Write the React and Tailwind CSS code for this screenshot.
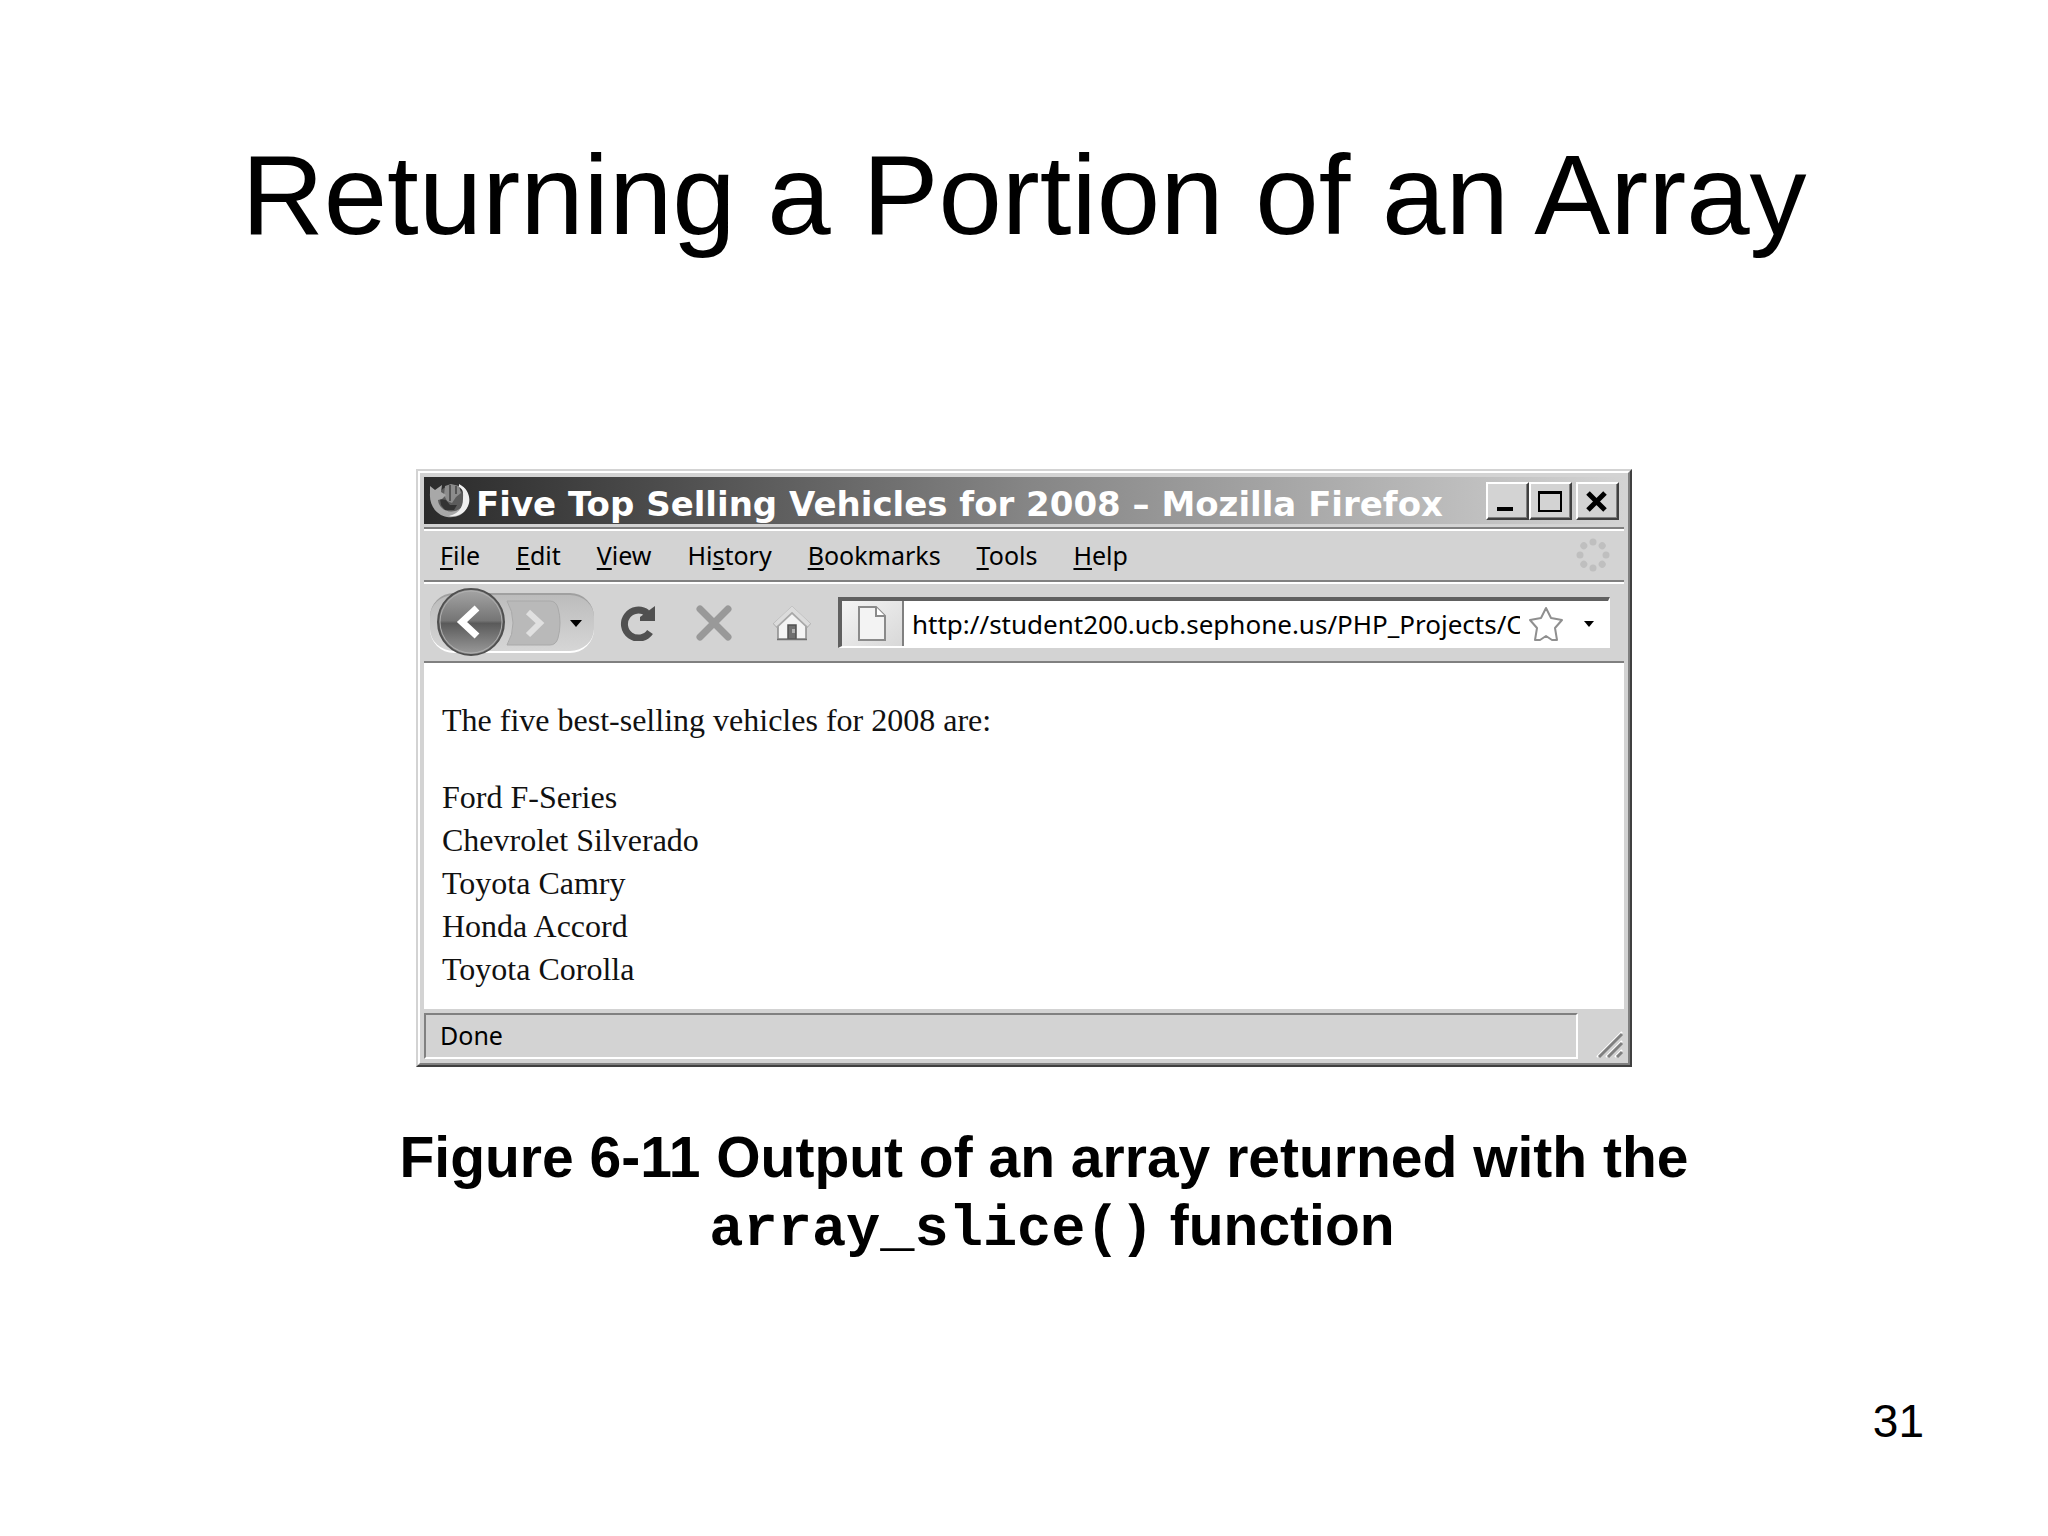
import React from 'react'

const menuItems = [
  { before: '', key: 'F', after: 'ile' },
  { before: '', key: 'E', after: 'dit' },
  { before: '', key: 'V', after: 'iew' },
  { before: 'Hi', key: 's', after: 'tory' },
  { before: '', key: 'B', after: 'ookmarks' },
  { before: '', key: 'T', after: 'ools' },
  { before: '', key: 'H', after: 'elp' },
]

const vehicles = ['Ford F-Series', 'Chevrolet Silverado', 'Toyota Camry', 'Honda Accord', 'Toyota Corolla']

const FirefoxIcon = () => (
  <svg viewBox="0 0 44 36" className="w-11 h-9 shrink-0">
    <circle cx="23" cy="16" r="13" fill="#5c5c5c" />
    <path d="M17 3 l6 -2 l8 2 l2 7 l-5 4 l-4 6 l-5 -2 l-3 -6z" fill="#8c8c8c" />
    <path d="M22 2 v16 M28 3 v8" stroke="#555" strokeWidth="2" />
    <path d="M12 16 l6 1 l4 5 l7 0 l-3 5 l-9 0 l-4 -5z" fill="#333" />
    <path d="M2 3 l5 4 l7 -5 l-1 7 l5 3 l-4 4 l-4 1 c1 8 8 13 17 11 c7 -2 10 -8 9 -16 l-1 -8 c6 5 7 14 4 20 c-4 9 -12 11 -20 10 c-11 -2 -18 -12 -17 -24z" fill="#a8a8a8" />
    <path d="M31 1 c10 5 13 16 8 24 c-3 6 -11 9 -18 8 c9 -2 14 -8 14 -17 c0 -5 1 -9 -4 -12z" fill="#f0f0f0" />
  </svg>
)

const BackIcon = () => (
  <svg viewBox="0 0 70 70" className="size-[70px]">
    <defs>
      <linearGradient id="back" x1="0" y1="0" x2="0" y2="1">
        <stop offset="0" stopColor="#a6a6a6" />
        <stop offset="0.48" stopColor="#757575" />
        <stop offset="0.52" stopColor="#5a5a5a" />
        <stop offset="1" stopColor="#9c9c9c" />
      </linearGradient>
    </defs>
    <circle cx="35" cy="34" r="33" fill="url(#back)" stroke="#505050" strokeWidth="2" />
    <circle cx="35" cy="34" r="31" fill="none" stroke="#b0b0b0" strokeWidth="1" />
    <path d="M41 20 L26 34 L41 48" fill="none" stroke="#fff" strokeWidth="7" />
  </svg>
)

const ForwardIcon = () => (
  <svg viewBox="0 0 56 48" className="w-14 h-12">
    <path d="M1 2 H44 Q50 2 52 9 Q54 16 54 24 Q54 32 52 39 Q50 46 44 46 H1 Q7 36 7 24 Q7 12 1 2z" fill="#b9b9b9" stroke="#a9a9a9" strokeWidth="1" />
    <path d="M22 13 L34 24 L22 36" fill="none" stroke="#e0e0e0" strokeWidth="6" />
  </svg>
)

const ReloadIcon = () => (
  <svg viewBox="0 0 36 36" className="size-9">
    <path d="M30 27 A14 14 0 1 1 27 8" fill="none" stroke="#505050" strokeWidth="7" />
    <path d="M35 1 V16 H20 V12z" fill="#505050" />
  </svg>
)

const StopIcon = () => (
  <svg viewBox="0 0 36 36" className="size-9">
    <path d="M4 4 L32 32 M32 4 L4 32" stroke="#999" strokeWidth="7" strokeLinecap="round" />
  </svg>
)

const HomeIcon = () => (
  <svg viewBox="0 0 40 36" className="w-10 h-9">
    <path d="M6 18 L20 6 L34 18 V34 H6z" fill="#f4f4f4" stroke="#8c8c8c" strokeWidth="1.5" />
    <path d="M3 21 L20 5 L37 21" fill="none" stroke="#a8a8a8" strokeWidth="6" />
    <path d="M3 20 L20 4 L37 20" fill="none" stroke="#dcdcdc" strokeWidth="4" />
    <path d="M16 34 V20 H24 V34z" fill="#707070" stroke="#505050" strokeWidth="1.5" />
    <path d="M20 24 h3 v4 h-3z" fill="#b0b0b0" />
    <path d="M5 34.5 H35" stroke="#707070" strokeWidth="1.5" />
  </svg>
)

const PageIcon = () => (
  <svg viewBox="0 0 28 36" className="w-7 h-9">
    <path d="M1 1 H18 L27 10 V34 H1z" fill="#f3f3f3" stroke="#8a8a8a" strokeWidth="2" />
    <path d="M18 1 V10 H27" fill="#fff" stroke="#8a8a8a" strokeWidth="2" />
  </svg>
)

const StarIcon = () => (
  <svg viewBox="0 0 36 36" className="size-9">
    <path d="M18 2 L23 12 L34 14 L27 22 L29 34 L24 34 L18 30 L12 34 L7 34 L9 22 L2 14 L13 12z" fill="#fff" stroke="#8f8f8f" strokeWidth="2" strokeLinejoin="round" />
  </svg>
)

const Throbber = () => (
  <svg viewBox="0 0 34 34" className="size-[34px]">
    {[0, 45, 90, 135, 180, 225, 270, 315].map((angle) => (
      <circle key={angle} cx="17" cy="4" r="3.5" fill="#bfbfbf" transform={`rotate(${angle} 17 17)`} />
    ))}
  </svg>
)

const ResizeGrip = () => (
  <svg viewBox="0 0 28 28" className="size-7">
    <path d="M1 26 L26 1 M10 26 L26 10 M19 26 L26 19" stroke="#fff" strokeWidth="2" />
    <path d="M3 26 L26 3 M12 26 L26 12 M21 26 L26 21" stroke="#808080" strokeWidth="3" />
  </svg>
)

const WindowButton = ({ label, children }) => (
  <button aria-label={label} className="w-[43px] h-[38px] flex items-center justify-center bg-[#d3d3d3] border-2 border-t-white border-l-white border-b-[#404040] border-r-[#404040] shadow-[inset_-1px_-1px_0_#808080]">
    {children}
  </button>
)

const TitleBar = () => (
  <div className="h-[47px] mb-[3px] flex items-center bg-linear-to-r from-[#2b2b2b] via-[#858585] to-[#d3d3d3] pl-1 pr-[5px]">
    <FirefoxIcon />
    <p className="flex-1 pl-1 pt-[6px] font-['DejaVu_Sans',sans-serif] font-bold text-[34px] leading-10 text-white whitespace-nowrap">
      Five Top Selling Vehicles for 2008 – Mozilla Firefox
    </p>
    <div className="flex">
      <WindowButton label="Minimize">
        <svg viewBox="0 0 26 24" className="w-[26px] h-6"><path d="M2 18 h16 v4 h-16z" fill="#000" /></svg>
      </WindowButton>
      <WindowButton label="Maximize">
        <svg viewBox="0 0 26 24" className="w-[26px] h-6">
          <path d="M1 3 H23 V22 H1z" fill="none" stroke="#000" strokeWidth="2" />
          <path d="M0 2 h24 v3 h-24z" fill="#000" />
        </svg>
      </WindowButton>
    </div>
    <div className="pl-1">
      <WindowButton label="Close">
        <svg viewBox="0 0 26 24" className="w-[26px] h-6"><path d="M3 4 L20 21 M20 4 L3 21" stroke="#000" strokeWidth="5" /></svg>
      </WindowButton>
    </div>
  </div>
)

const MenuBar = () => (
  <div className="h-[53px] flex items-center justify-between border-y-2 border-t-white border-b-[#808080] pl-4 pr-[14px] pb-[2px]">
    <nav className="flex gap-9 font-['Noto_Sans',sans-serif] text-[25px] leading-8">
      {menuItems.map((item) => (
        <button key={item.key + item.after}>
          {item.before}
          <span className="underline decoration-2 underline-offset-[3px]">{item.key}</span>
          {item.after}
        </button>
      ))}
    </nav>
    <Throbber />
  </div>
)

const Toolbar = () => (
  <div className="h-[81px] flex items-center border-t-2 border-t-white border-b-2 border-b-[#808080] pl-[6px] pr-[14px]">
    <div className="w-[164px] h-[60px] shrink-0 flex items-center rounded-[24px] border-t-2 border-t-[#a0a0a0] border-b-2 border-b-white bg-linear-to-b from-[#bcbcbc] to-[#d6d6d6] pl-[6px]">
      <button aria-label="Back" className="shrink-0"><BackIcon /></button>
      <button aria-label="Forward" disabled className="shrink-0"><ForwardIcon /></button>
      <button aria-label="Recent pages" className="pl-2">
        <svg viewBox="0 0 12 8" className="w-3 h-2"><path d="M0 1 H12 L6 8z" fill="#000" /></svg>
      </button>
    </div>
    <div className="shrink-0 flex gap-10 pl-[26px]">
      <button aria-label="Reload"><ReloadIcon /></button>
      <button aria-label="Stop"><StopIcon /></button>
      <button aria-label="Home"><HomeIcon /></button>
    </div>
    <div className="flex-1 min-w-0 h-[51px] ml-[26px] flex items-center bg-white border-t-4 border-t-[#606060] border-l-4 border-l-[#606060] border-b-2 border-b-white border-r-2 border-r-white">
      <div className="w-[62px] h-full shrink-0 flex items-center justify-center bg-linear-to-br from-[#f4f4f4] to-[#d8d8d8] border-r-2 border-r-[#808080]">
        <PageIcon />
      </div>
      <input
        type="text"
        aria-label="Address"
        defaultValue="http://student200.ucb.sephone.us/PHP_Projects/C"
        className="flex-1 min-w-0 ml-2 h-10 font-['Noto_Sans',sans-serif] text-[26px] leading-8 outline-none"
      />
      <button aria-label="Bookmark this page" className="pl-2"><StarIcon /></button>
      <button aria-label="Show history" className="pl-5 pr-[14px]">
        <svg viewBox="0 0 10 6" className="w-[10px] h-[6px]"><path d="M0 0 H10 L5 6z" fill="#000" /></svg>
      </button>
    </div>
  </div>
)

const BrowserWindow = () => (
  <div className="border-2 border-t-[#d3d3d3] border-l-[#d3d3d3] border-b-[#404040] border-r-[#404040]">
    <div className="border-2 border-t-white border-l-white border-b-[#808080] border-r-[#808080] bg-[#d3d3d3] p-1">
      <TitleBar />
      <div className="border-t-2 border-t-[#808080]">
        <MenuBar />
        <Toolbar />
      </div>
      <div className="bg-white px-[18px] pt-9 pb-[18px] font-['Liberation_Serif',serif] text-[32px] leading-[43px] text-[#111]">
        <p>The five best-selling vehicles for 2008 are:</p>
        <ul className="pt-[34px]">
          {vehicles.map((name) => (
            <li key={name}>{name}</li>
          ))}
        </ul>
      </div>
      <div className="flex items-end pt-1">
        <p className="flex-1 h-[46px] border-2 border-t-[#808080] border-l-[#808080] border-b-white border-r-white pl-[14px] font-['Noto_Sans',sans-serif] text-[25px] leading-10">Done</p>
        <div className="w-[46px] flex justify-end">
          <ResizeGrip />
        </div>
      </div>
    </div>
  </div>
)

const App = () => {
  return (
    <main className="min-h-screen bg-white text-black font-['Liberation_Sans',sans-serif] pt-[138px]">
      <h1 className="text-center text-[114px] leading-[114px]">Returning a Portion of an Array</h1>
      <figure className="mx-[416px] pt-[217px]">
        <BrowserWindow />
        <figcaption className="pt-14 pl-10 -mx-20 text-center font-bold text-[57px] leading-[68px]">
          Figure 6-11 Output of an array returned with the
          <br />
          &nbsp;<code className="font-['Liberation_Mono',monospace]">array_slice()</code> function
        </figcaption>
      </figure>
      <p className="pt-[134px] pr-[124px] text-right text-[46px] leading-[46px]">31</p>
    </main>
  )
}

export default App
